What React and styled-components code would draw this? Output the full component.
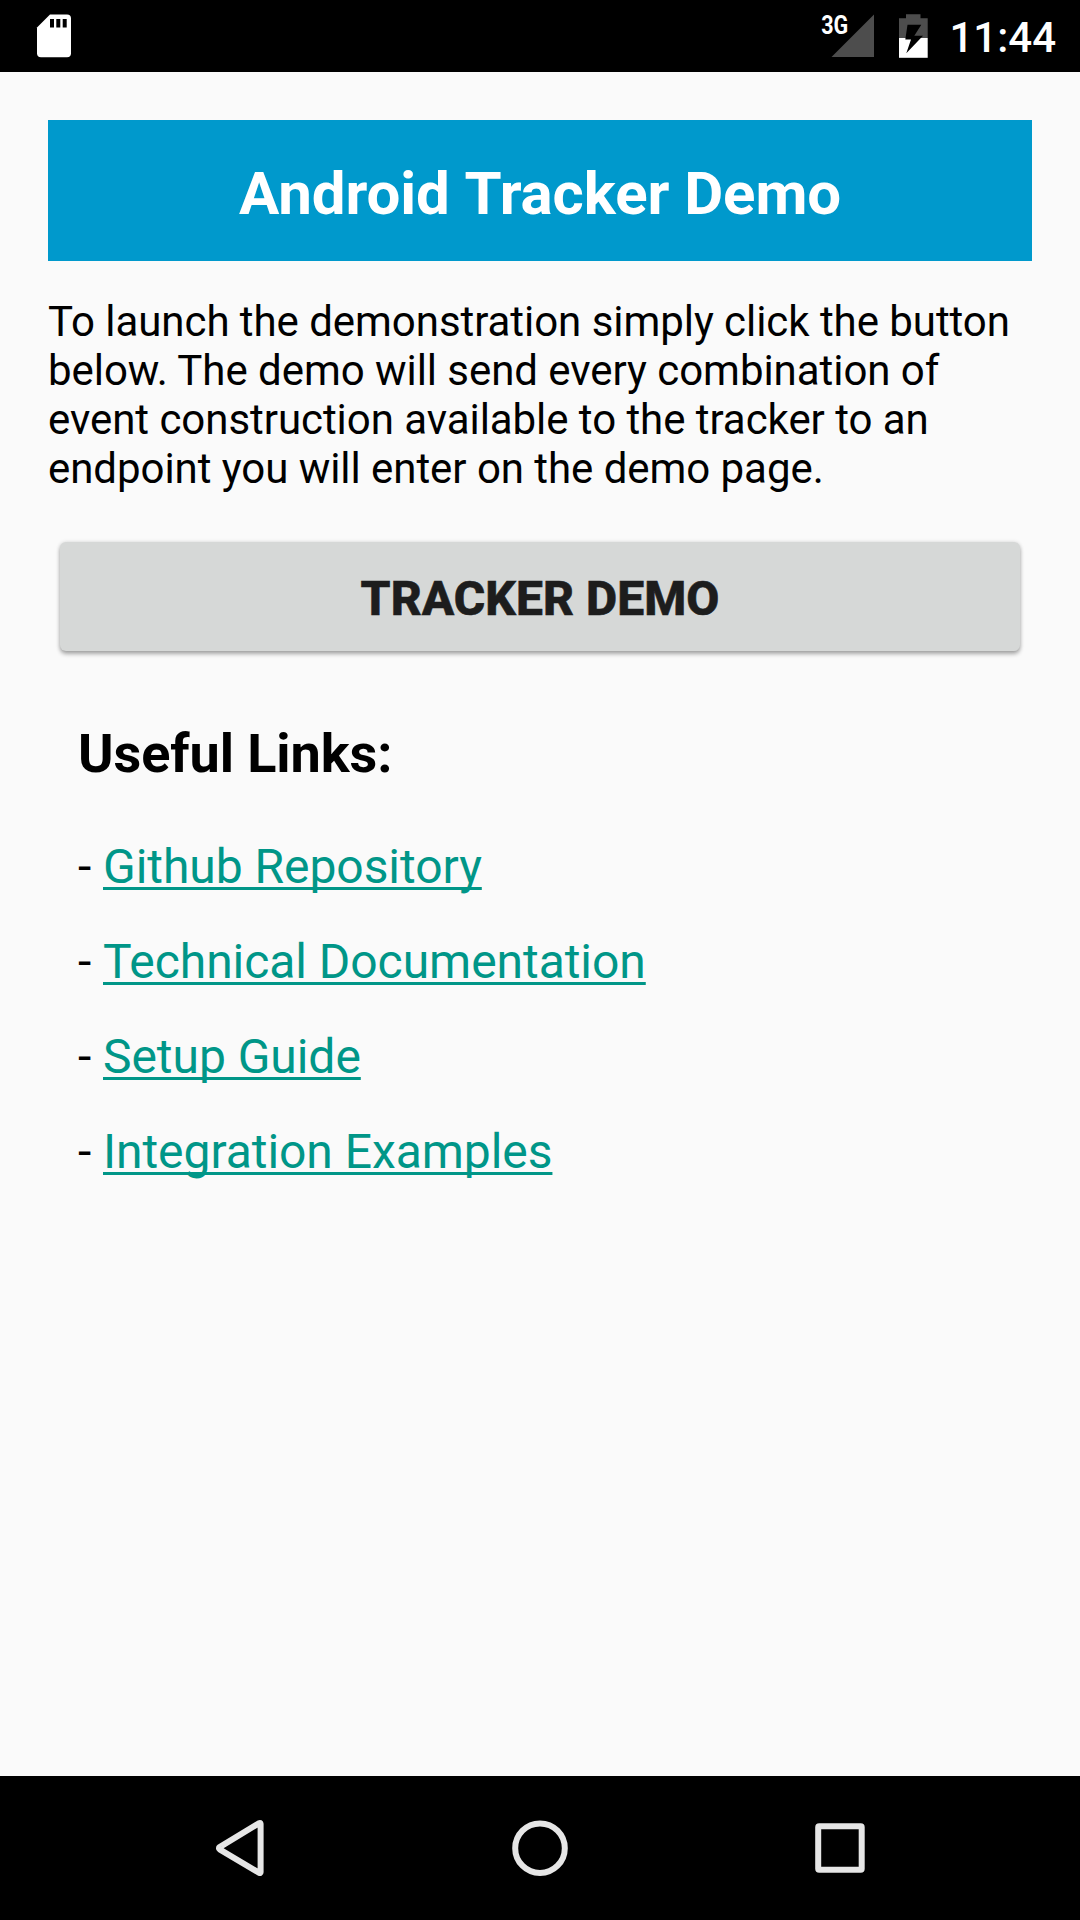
import React from "react";
import styled, { createGlobalStyle } from "styled-components";

const GlobalStyle = createGlobalStyle`
  html, body { margin: 0; background: #fafafa; }
  body { font-family: Roboto, "Liberation Sans", sans-serif; color: #000; }
`;

const Screen = styled.div`
  display: flex;
  flex-direction: column;
  width: 1080px;
  height: 1920px;
  background: #fafafa;
  overflow: hidden;
`;

const StatusBar = styled.header`
  display: flex;
  align-items: flex-start;
  flex: none;
  height: 72px;
  background: #000;
  svg { display: block; }
`;

const StatusIcons = styled.div`
  display: flex;
  height: 72px;
  margin-left: auto;
`;

const Clock = styled.time`
  width: 130px;
  font-size: 42px;
  font-weight: 500;
  line-height: 75px;
  color: #fff;
  white-space: nowrap;
  text-indent: -0.5px;
`;

const Content = styled.main`
  flex: 1;
  padding: 48px 48px 0;
`;

const Title = styled.h1`
  box-sizing: border-box;
  height: 141px;
  margin: 0 0 36px;
  padding-top: 6px;
  background: #0099cc;
  color: #fff;
  font-size: 60px;
  font-weight: 700;
  line-height: 135px;
  text-align: center;
  letter-spacing: -0.08px;
`;

const Word = styled.span`
  display: inline-block;
`;

const Intro = styled.p`
  margin: 0 0 49px;
  font-size: 42px;
  line-height: 49px;
  letter-spacing: -0.05px;
`;

const DemoButton = styled.button`
  display: block;
  box-sizing: border-box;
  width: 960px;
  height: 109px;
  margin: 0 12px 71px;
  padding: 4px 0 0;
  border: 0;
  border-radius: 6px;
  background: #d6d8d7;
  box-shadow: 0 3px 4px rgba(0, 0, 0, 0.32), 0 0 4px rgba(0, 0, 0, 0.12);
  color: #1d1d1d;
  font-family: inherit;
  font-size: 48px;
  font-weight: 800;
  line-height: 105px;
  letter-spacing: 0.05px;
  -webkit-text-stroke: 0.6px #1d1d1d;
`;

const Links = styled.section`
  padding-left: 30px;
`;

const LinksHeading = styled.h2`
  margin: 0 0 34px;
  font-size: 54px;
  font-weight: 700;
  line-height: 63px;
  letter-spacing: -0.08px;
`;

const LinkRow = styled.div`
  display: flex;
  font-size: 48px;
  line-height: 95px;
`;

const Dash = styled.span`
  width: 25px;
`;

const Link = styled.a`
  color: #009688;
  letter-spacing: -0.05px;
  text-decoration: underline;
  text-decoration-thickness: 3px;
  text-decoration-skip-ink: none;
  text-underline-offset: 4px;
`;

const NavBar = styled.nav`
  display: flex;
  justify-content: center;
  flex: 0 0 144px;
  background: #000;
`;

const NavKey = styled.svg`
  width: 300px;
  height: 144px;
  fill: none;
  stroke: #e6e6e6;
  stroke-width: 6;
  stroke-linejoin: round;
`;

const links = ["Github Repository", "Technical Documentation", "Setup Guide", "Integration Examples"];

const SdCard = () => (
  <svg width="108" height="72" viewBox="0 0 108 72">
    <path fill="#fff" d="M50 14.5H67a4 4 0 0 1 4 4V53.3a4 4 0 0 1-4 4H41a4 4 0 0 1-4-4V27.5Z" />
    <path fill="#000" d="M50 19h4v8.5h-4zM56.3 19h4v8.5h-4zM62.7 19h4v8.5h-4z" />
  </svg>
);

const Signal = () => (
  <svg width="66" height="72" viewBox="0 0 66 72">
    <path fill="#4d4d4d" d="M54 14.5V57H11.5Z" />
    <text x="1.2" y="33.5" fill="#fff" fontSize="25.5" fontWeight="700" textLength="27" lengthAdjust="spacingAndGlyphs">3G</text>
  </svg>
);

const Battery = () => (
  <svg width="64" height="72" viewBox="0 0 64 72">
    <path fill="#4d4d4d" d="M20 14.3h14.5v4H41.7V38H13V18.3h7z" />
    <path fill="#fff" d="M13 38H41.7V57.8H13z" />
    <path fill="#000" d="M21.5 24.7H35.3L28.3 35.7H37L20.3 53.2L25 39.5H19.3Z" />
  </svg>
);

export default function App() {
  return (
    <>
      <GlobalStyle />
      <Screen>
        <StatusBar>
          <SdCard />
          <StatusIcons>
            <Signal />
            <Battery />
            <Clock>11:44</Clock>
          </StatusIcons>
        </StatusBar>
        <Content>
          <Title>
            <Word>Android</Word> <Word>Tracker</Word> <Word>Demo</Word>
          </Title>
          <Intro>
            To launch the demonstration simply click the button below. The demo will send every
            combination of event construction available to the tracker to an endpoint you will
            enter on the demo page.
          </Intro>
          <DemoButton type="button">TRACKER DEMO</DemoButton>
          <Links>
            <LinksHeading>Useful Links:</LinksHeading>
            {links.map((label) => (
              <LinkRow key={label}>
                <Dash>-</Dash>
                <Link href="#">{label}</Link>
              </LinkRow>
            ))}
          </Links>
        </Content>
        <NavBar>
          <NavKey viewBox="0 0 300 144">
            <path d="M170.6 47.8V96.2c0 .8-.6 1.1-1.3.7L129.6 73.3c-.9-.6-.9-1.6 0-2.2L169.3 47.1c.7-.4 1.3-.1 1.3.7Z" />
          </NavKey>
          <NavKey viewBox="0 0 300 144">
            <circle cx="150" cy="72.2" r="24.8" />
          </NavKey>
          <NavKey viewBox="0 0 300 144">
            <rect x="128.2" y="50.2" width="43.5" height="43.5" rx="1" />
          </NavKey>
        </NavBar>
      </Screen>
    </>
  );
}
